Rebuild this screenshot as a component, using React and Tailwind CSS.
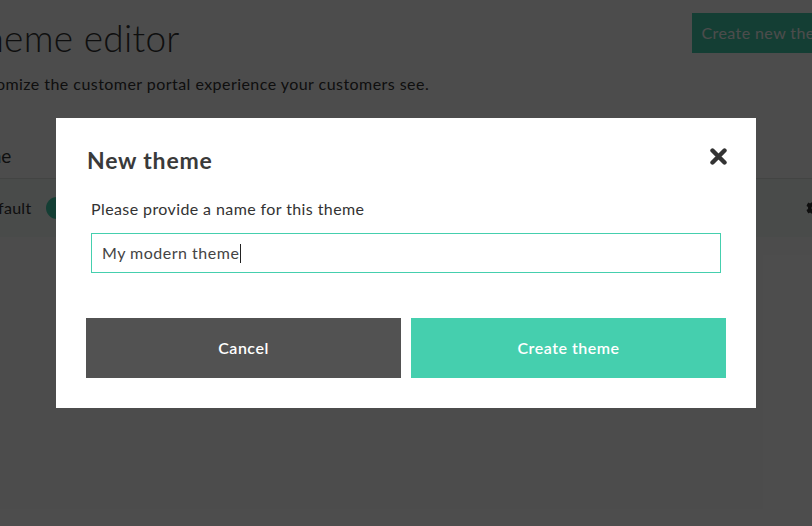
import { FaCog } from "react-icons/fa";

export default function App() {
  return (
    <div className="relative h-[526px] w-[812px] overflow-hidden bg-white font-['Lato',sans-serif] text-[#333]">
      {/* page behind the dialog */}
      <div className="-ml-[38px] w-[900px]">
        <div className="flex items-start justify-between pt-[13px]">
          <h1 className="pt-[5px] text-[37px] font-light leading-[40px] tracking-[0.3px] text-[#333]">Theme editor</h1>
          <button className="mr-[15px] h-[40px] bg-[#45cfae] px-[10px] text-[16px] tracking-[0.4px] text-white">
            Create new theme
          </button>
        </div>
        <p className="mt-[15px] text-[16px] leading-[22px] tracking-[0.45px] text-[#333]">
          Customize the customer portal experience your customers see.
        </p>

        <div className="mt-[42px]">
          <div className="flex h-[42px] items-center border-b border-[#dfe3e2] pl-0 pb-[2px] text-[19px]">Name</div>
          <div className="flex h-[58px] items-center justify-between bg-[#f4faf8] pl-[15px] pr-[40px]">
            <div className="flex items-center gap-[15px]">
              <span className="text-[16px] tracking-[0.3px]">Default</span>
              <span className="h-[22px] w-[40px] rounded-full bg-[#45cfae]" />
            </div>
            <FaCog className="text-[16px] text-[#333]" />
          </div>
        </div>
      </div>

      {/* overlay + dialog */}
      <div className="absolute inset-0 flex items-center justify-center bg-black/70">
        <div className="w-[700px] bg-white px-[30px] pb-[30px] pt-[27px]">
          <div className="flex items-center justify-between pl-[1px] -mr-[1px]">
            <h2 className="text-[23px] font-bold leading-[30px] tracking-[0.8px] text-[#3a3a3a]">New theme</h2>
            <svg width="17" height="17" viewBox="0 0 17 17" className="mt-[-8px]">
              <path d="M2.5 2.5 L14.5 14.5 M14.5 2.5 L2.5 14.5" stroke="#333" strokeWidth="4.4" strokeLinecap="round" />
            </svg>
          </div>

          <div className="px-[5px]">
            <label className="mt-[23px] block text-[16px] leading-[22px] tracking-[0.4px] text-[#333]">
              Please provide a name for this theme
            </label>
            <div className="mt-[13px] flex h-[40px] items-center border border-[#45cfae] px-[10px] text-[16px] tracking-[0.5px] text-[#444]">
              <span>My modern theme</span>
              <span className="ml-[1px] h-[19px] w-px bg-[#222]" />
            </div>
          </div>

          <div className="mt-[45px] flex gap-[10px]">
            <button className="h-[60px] flex-1 bg-[#525252] text-[16px] font-semibold tracking-[0.5px] text-white">Cancel</button>
            <button className="h-[60px] flex-1 bg-[#45cfae] text-[16px] font-semibold tracking-[0.5px] text-white">Create theme</button>
          </div>
        </div>
      </div>
    </div>
  );
}
